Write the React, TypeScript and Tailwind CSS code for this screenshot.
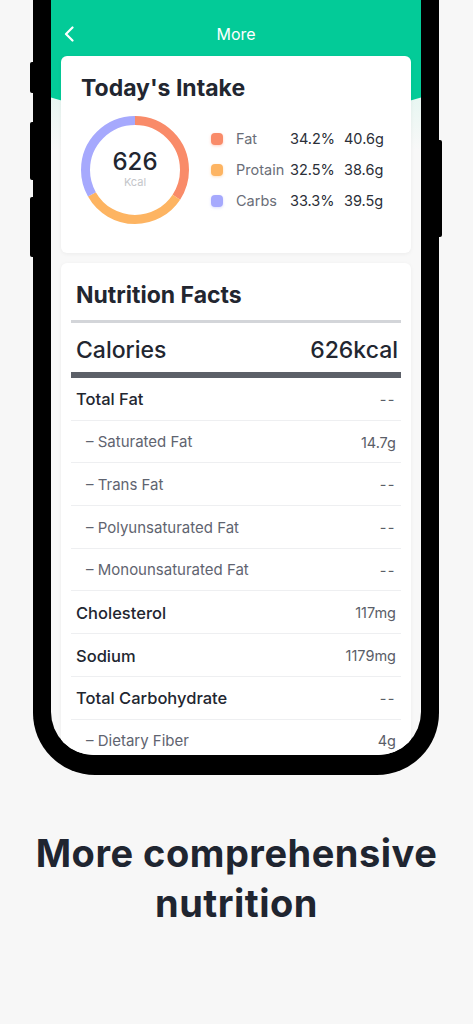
import React from 'react';

const macros = [
  { label: 'Fat', pct: 34.2, grams: '40.6g', color: '#F98B69' },
  { label: 'Protain', pct: 32.5, grams: '38.6g', color: '#FDB462' },
  { label: 'Carbs', pct: 33.3, grams: '39.5g', color: '#A6A9FD' },
];

const facts = [
  { name: 'Total Fat', value: '--', main: true },
  { name: 'Saturated Fat', value: '14.7g' },
  { name: 'Trans Fat', value: '--' },
  { name: 'Polyunsaturated Fat', value: '--' },
  { name: 'Monounsaturated Fat', value: '--' },
  { name: 'Cholesterol', value: '117mg', main: true },
  { name: 'Sodium', value: '1179mg', main: true },
  { name: 'Total Carbohydrate', value: '--', main: true },
  { name: 'Dietary Fiber', value: '4g' },
];

function Donut() {
  const r = 49.5;
  const c = 2 * Math.PI * r;
  let offset = 0;
  return (
    <div className="relative w-[108px] h-[108px] shrink-0">
      <svg width="108" height="108" viewBox="0 0 108 108" className="-rotate-90">
        {macros.map(m => {
          const len = (m.pct / 100) * c;
          const el = (
            <circle
              key={m.label}
              cx="54"
              cy="54"
              r={r}
              fill="none"
              stroke={m.color}
              strokeWidth="9"
              strokeDasharray={`${len} ${c - len}`}
              strokeDashoffset={-offset}
            />
          );
          offset += len;
          return el;
        })}
      </svg>
      <div className="absolute inset-0 flex flex-col items-center justify-center">
        <span className="text-[24px] leading-[28px] font-medium text-[#222630] mt-[-4px]">626</span>
        <span className="text-[11px] leading-[12px] text-[#c4c6ca]">Kcal</span>
      </div>
    </div>
  );
}

function App() {
  return (
    <div
      className="w-[473px] h-[1024px] overflow-hidden bg-[#f7f7f7]"
      style={{ fontFamily: 'Inter, "Noto Sans", sans-serif' }}
    >
      {/* phone */}
      <div className="relative ml-[33px] w-[406px] border-x-[18px] border-b-[20px] border-black rounded-b-[62px] bg-black">
        <div className="absolute -left-[21px] top-[62px] w-[3px] h-[31px] bg-black rounded-l-[2px]" />
        <div className="absolute -left-[21px] top-[122px] w-[3px] h-[58px] bg-black rounded-l-[2px]" />
        <div className="absolute -left-[21px] top-[197px] w-[3px] h-[60px] bg-black rounded-l-[2px]" />
        <div className="absolute -right-[21px] top-[140px] w-[3px] h-[97px] bg-black rounded-r-[2px]" />

        <div className="relative h-[755px] overflow-hidden rounded-b-[43px] bg-[#f8f8f8]">
          <div className="absolute top-0 left-0 w-full h-[150px] bg-gradient-to-b from-[#c8f3e6] to-[#f8f8f8]" />
          <div className="absolute top-0 left-1/2 -translate-x-1/2 w-[600px] h-[122px] bg-[#03CB98] [border-radius:0_0_50%_50%/0_0_115px_115px]" />

          <div className="relative">
            <header className="h-[56px] pt-[22px] flex items-start justify-center relative">
              <svg
                width="12"
                height="16"
                viewBox="0 0 12 16"
                className="absolute left-[12px] top-[26px]"
                fill="none"
                stroke="white"
                strokeWidth="2.2"
                strokeLinecap="round"
                strokeLinejoin="round"
              >
                <path d="M9.5 1.5 3 8l6.5 6.5" />
              </svg>
              <span className="text-white text-[16px] leading-[24px]">More</span>
            </header>

            {/* Today's intake */}
            <section className="mx-[10px] h-[197px] bg-white rounded-[6px] shadow-[0_1px_4px_rgba(0,0,0,0.05)] pt-[18px] px-[20px]">
              <h2 className="text-[23px] leading-[28px] font-bold text-[#222630]">Today's Intake</h2>
              <div className="flex items-center mt-[14px]">
                <Donut />
                <div className="ml-[22px] flex flex-col gap-[11px]">
                  {macros.map(m => (
                    <div key={m.label} className="flex items-center h-[20px] text-[14.5px]">
                      <span
                        className="w-[12px] h-[12px] rounded-[4px] shrink-0"
                        style={{ backgroundColor: m.color, boxShadow: `0 1px 3px ${m.color}66` }}
                      />
                      <span className="ml-[13px] w-[54px] text-[#6a6e78]">{m.label}</span>
                      <span className="w-[54px] text-[#2b2f38]">{m.pct}%</span>
                      <span className="text-[#2b2f38]">{m.grams}</span>
                    </div>
                  ))}
                </div>
              </div>
            </section>

            {/* Nutrition facts */}
            <section className="mx-[10px] mt-[10px] bg-white rounded-[6px] shadow-[0_1px_4px_rgba(0,0,0,0.05)] pt-[18px] px-[10px] pb-[20px]">
              <h2 className="pl-[5px] text-[23px] leading-[28px] font-bold text-[#222630]">Nutrition Facts</h2>
              <div className="mt-[11px] h-[3px] bg-[#d3d5d9]" />
              <div className="h-[49px] pt-[5px] flex items-center justify-between pl-[5px] pr-[3px] text-[23px] font-medium text-[#222630]">
                <span>Calories</span>
                <span>626kcal</span>
              </div>
              <div className="h-[6px] bg-[#5c6068]" />
              {facts.map(f => (
                <div
                  key={f.name}
                  className="h-[42.7px] pt-[2px] flex items-center justify-between px-[5px] border-b border-[#eeeff1]"
                >
                  {f.main ? (
                    <span className="text-[16.5px] font-medium text-[#222630]">{f.name}</span>
                  ) : (
                    <span className="pl-[10px] text-[15px] text-[#5f6470]">– {f.name}</span>
                  )}
                  <span className={`text-[14.5px] text-[#5a5e68] ${f.value === '--' ? 'tracking-[1.5px]' : ''}`}>
                    {f.value}
                  </span>
                </div>
              ))}
            </section>
          </div>
        </div>
      </div>

      <h1 className="mt-[53px] text-center text-[38px] leading-[50px] font-bold text-[#1f2530] tracking-[0.5px]">
        More comprehensive
        <br />
        nutrition
      </h1>
    </div>
  );
}

export default App;
